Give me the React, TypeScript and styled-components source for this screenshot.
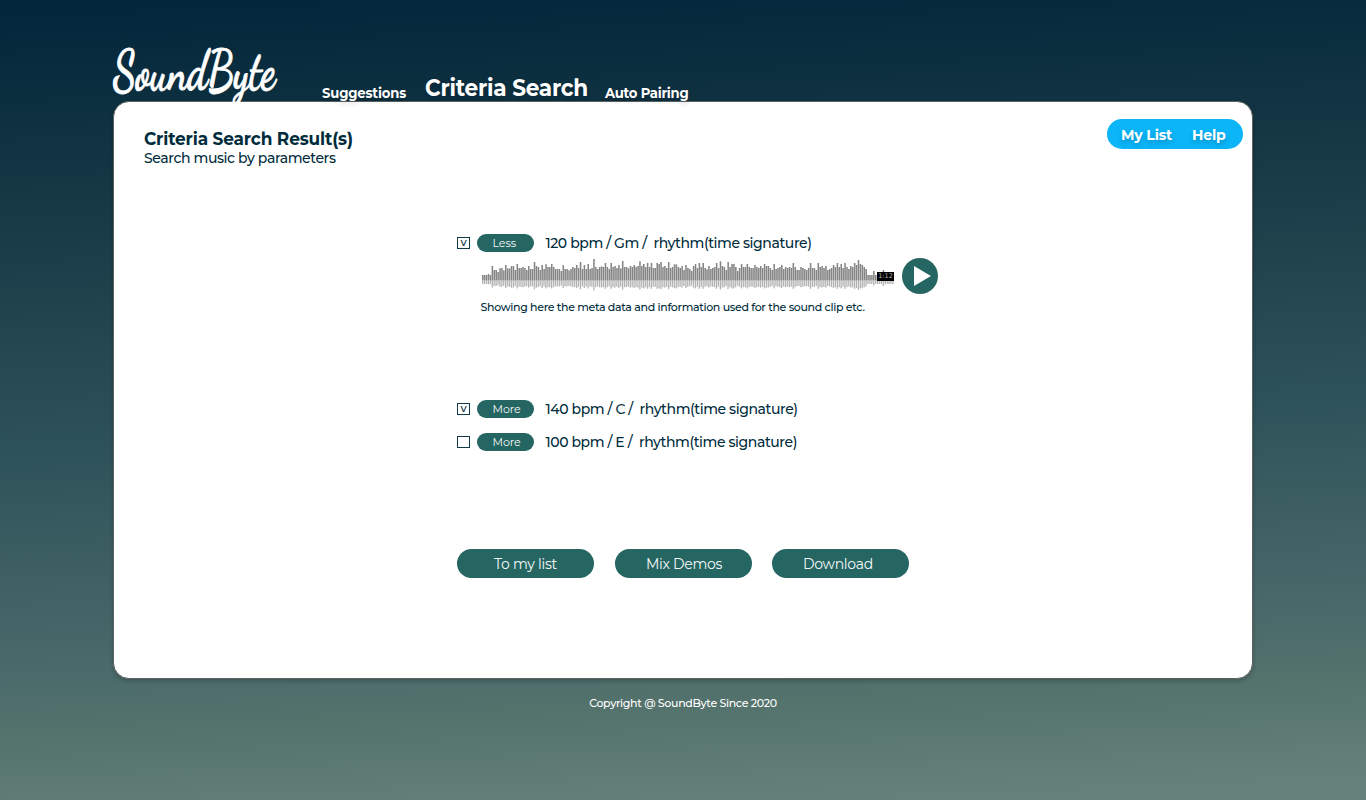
import React from "react";
import styled, { createGlobalStyle } from "styled-components";

const GlobalStyle = createGlobalStyle`
  * { box-sizing: border-box; }
  html, body { margin: 0; padding: 0; }
  body { font-family: Montserrat, Inter, "Open Sans", sans-serif; color: #002c3c; }
  button { font: inherit; border: 0; padding: 0; cursor: pointer; }
`;

const Page = styled.div`
  width: 100%;
  height: 800px;
  overflow: hidden;
  padding: 0 113px;
  background: linear-gradient(177.5deg, #02273b 1%, #163744 23%, #2e525a 53%, #4c6c6c 80%, #53726c 85%, #65827a 98%);
`;

const Header = styled.header`
  height: 101px;
  display: flex;
  align-items: flex-end;
  color: #fff;
`;

const Logo = styled.div`
  width: 209px;
  height: 60px;
  display: flex;
`;

const LogoText = styled.span`
  font: 700 56px/60px "Dancing Script", "Kaushan Script", "Pacifico", cursive;
  white-space: nowrap;
  -webkit-text-stroke: 0.9px #fff;
  transform: scaleX(0.72);
  transform-origin: 0 50%;
`;

const NavLink = styled.a<{ $width: number; $active?: boolean; $track: number }>`
  width: ${(p) => p.$width}px;
  font-size: ${(p) => (p.$active ? 23 : 14)}px;
  line-height: ${(p) => (p.$active ? 26 : 15)}px;
  letter-spacing: ${(p) => p.$track}px;
  font-weight: 700;
  white-space: nowrap;
  text-shadow: 0 3px 6px rgba(0, 0, 0, 0.16);
  transform: scaleX(0.94);
  transform-origin: 0 50%;
`;

const Panel = styled.main`
  height: 578px;
  border: 1px solid #5c6262;
  border-radius: 16px;
  background: #fff;
  box-shadow: 0 2px 4px rgba(0, 0, 0, 0.22);
`;

const PanelTop = styled.div`
  height: 132px;
  padding: 17px 9px 0 30px;
  display: flex;
  justify-content: space-between;
  align-items: flex-start;
`;

const Title = styled.h1`
  margin: 10px 0 0;
  font-size: 18px;
  line-height: 20px;
  letter-spacing: -0.15px;
  font-weight: 700;
  transform: scaleX(0.94);
  transform-origin: 0 50%;
`;

const Subtitle = styled.p`
  margin: 0;
  font-size: 14px;
  font-weight: 500;
  line-height: 19px;
  letter-spacing: -0.39px;
`;

const AccountBar = styled.div`
  width: 136px;
  height: 30px;
  padding-left: 14px;
  display: flex;
  align-items: center;
  border-radius: 15px;
  background: #0bb5f8;
  color: #fff;
`;

const AccountLink = styled.a<{ $width: number }>`
  width: ${(p) => p.$width}px;
  font-size: 15px;
  font-weight: 700;
  letter-spacing: -0.2px;
  white-space: nowrap;
  text-shadow: 0 3px 6px rgba(0, 0, 0, 0.2);
  transform: scaleX(0.94);
  transform-origin: 0 50%;
`;

const Results = styled.section`
  padding-left: 343px;
`;

const ResultRow = styled.div<{ $gap?: number }>`
  height: 18px;
  display: flex;
  align-items: center;
  margin-bottom: ${(p) => p.$gap ?? 0}px;
`;

const Check = styled.span`
  width: 13px;
  height: 12px;
  margin-right: 7.4px;
  border: 1px solid #12394a;
  font-size: 11px;
  font-weight: 500;
  line-height: 9px;
  text-align: center;
`;

const Toggle = styled.button`
  width: 57px;
  height: 18px;
  margin-right: 11.1px;
  padding-left: 15px;
  border-radius: 9px;
  background: #256562;
  color: #f4f9f9;
  font-size: 11px;
  line-height: 18px;
  text-align: left;
`;

const ResultText = styled.span`
  font-size: 14px;
  font-weight: 500;
  line-height: 18px;
  letter-spacing: -0.41px;
  white-space: pre;
`;

const Player = styled.div`
  height: 36px;
  margin-top: 6px;
  padding-left: 24px;
  display: flex;
`;

const WaveBox = styled.div`
  position: relative;
  width: 414px;
  margin-right: 7px;
`;

const Duration = styled.span`
  position: absolute;
  left: 396px;
  top: 14px;
  width: 17px;
  height: 9px;
  background: #000;
  color: #b5b5b5;
  font: 6.5px/9px "DejaVu Sans", sans-serif;
  text-align: center;
`;

const Description = styled.p`
  height: 18px;
  margin: 4px 0 84px 23.5px;
  font-size: 11px;
  font-weight: 500;
  line-height: 18px;
  letter-spacing: -0.32px;
`;

const Actions = styled.div`
  display: flex;
  gap: 20.5px;
  margin-top: 98px;
`;

const Action = styled.button<{ $left?: number; $right?: number }>`
  width: 137px;
  height: 29px;
  padding: 1px ${(p) => p.$right ?? 0}px 0 ${(p) => p.$left ?? 0}px;
  border-radius: 15px;
  background: #256562;
  color: #f4f9f9;
  font-size: 14px;
  line-height: 28px;
  letter-spacing: -0.28px;
`;

const Footer = styled.footer`
  margin-top: 16px;
  color: #fff;
  font-size: 11px;
  font-weight: 500;
  line-height: 16px;
  letter-spacing: -0.32px;
  text-align: center;
`;

/* Peak levels of the clip, in thirds of a pixel. */
const peaks = [
  15, 15, 15, 18, 15, 42, 30, 30, 24, 35, 36, 29, 45, 35, 35, 42, 42, 30, 48, 36, 36, 39, 36, 30, 42, 33, 33, 54,
  42, 39, 30, 45, 33, 47, 39, 39, 48, 39, 33, 33, 33, 27, 45, 33, 33, 29, 33, 39, 36, 45, 36, 54, 33, 45, 33, 48,
  33, 36, 63, 39, 33, 39, 41, 39, 51, 39, 33, 51, 39, 42, 36, 45, 35, 57, 39, 39, 35, 42, 39, 45, 39, 42, 56, 42,
  48, 39, 51, 39, 51, 36, 36, 51, 48, 54, 39, 42, 36, 54, 36, 39, 47, 47, 39, 36, 42, 30, 45, 36, 33, 27, 42, 48,
  36, 51, 39, 51, 36, 32, 42, 33, 36, 39, 51, 36, 56, 42, 39, 30, 54, 39, 48, 48, 39, 27, 36, 48, 39, 39, 48, 39,
  36, 36, 45, 39, 36, 42, 36, 48, 42, 42, 36, 30, 48, 33, 36, 39, 45, 33, 39, 36, 39, 36, 51, 39, 30, 30, 39, 36,
  33, 30, 36, 51, 36, 36, 30, 51, 39, 42, 36, 42, 30, 33, 36, 45, 39, 51, 39, 48, 36, 51, 39, 33, 42, 39, 51, 45,
  60, 48, 45, 39, 33, 15, 15, 15, 27, 15, 15, 15, 15, 30, 18, 15, 15, 15, 15,
];

function Waveform() {
  return (
    <svg width="414" height="36" viewBox="0 0 414 36" fill="none">
      <path d="M1 22.5H412" stroke="#d5d5d5" />
      {peaks.map((peak, i) => {
        const x = 1 + i * 1.917;
        const up = peak / 3;
        return (
          <React.Fragment key={i}>
            <rect x={x} y={22 - up} width="1.55" height={up} fill="#858585" />
            <rect x={x} y="22" width="1.3" height={up * 0.4 + 2} fill="#b3b3b3" />
          </React.Fragment>
        );
      })}
    </svg>
  );
}

function PlayIcon() {
  return (
    <svg width="36" height="36" viewBox="0 0 36 36">
      <circle cx="18" cy="18" r="18" fill="#256562" />
      <path d="M12 8L29 18L12 28Z" fill="#fff" />
    </svg>
  );
}

export default function App() {
  return (
    <>
      <GlobalStyle />
      <Page>
        <Header>
          <Logo>
            <LogoText>SoundByte</LogoText>
          </Logo>
          <NavLink $width={102.5} $track={-0.15}>Suggestions</NavLink>
          <NavLink $width={180.5} $track={-0.25} $active>Criteria Search</NavLink>
          <NavLink $width={100} $track={-0.25}>Auto Pairing</NavLink>
        </Header>
        <Panel>
          <PanelTop>
            <div>
              <Title>Criteria Search Result(s)</Title>
              <Subtitle>Search music by parameters</Subtitle>
            </div>
            <AccountBar>
              <AccountLink $width={71}>My List</AccountLink>
              <AccountLink $width={40}>Help</AccountLink>
            </AccountBar>
          </PanelTop>
          <Results>
            <ResultRow>
              <Check>v</Check>
              <Toggle>Less</Toggle>
              <ResultText>{"120 bpm / Gm /  rhythm(time signature)"}</ResultText>
            </ResultRow>
            <Player>
              <WaveBox>
                <Waveform />
                <Duration>1:12</Duration>
              </WaveBox>
              <PlayIcon />
            </Player>
            <Description>Showing here the meta data and information used for the sound clip etc.</Description>
            <ResultRow $gap={15}>
              <Check>v</Check>
              <Toggle>More</Toggle>
              <ResultText>{"140 bpm / C /  rhythm(time signature)"}</ResultText>
            </ResultRow>
            <ResultRow>
              <Check />
              <Toggle>More</Toggle>
              <ResultText>{"100 bpm / E /  rhythm(time signature)"}</ResultText>
            </ResultRow>
            <Actions>
              <Action>To my list</Action>
              <Action $left={2}>Mix Demos</Action>
              <Action $right={5}>Download</Action>
            </Actions>
          </Results>
        </Panel>
        <Footer>Copyright @ SoundByte Since 2020</Footer>
      </Page>
    </>
  );
}
